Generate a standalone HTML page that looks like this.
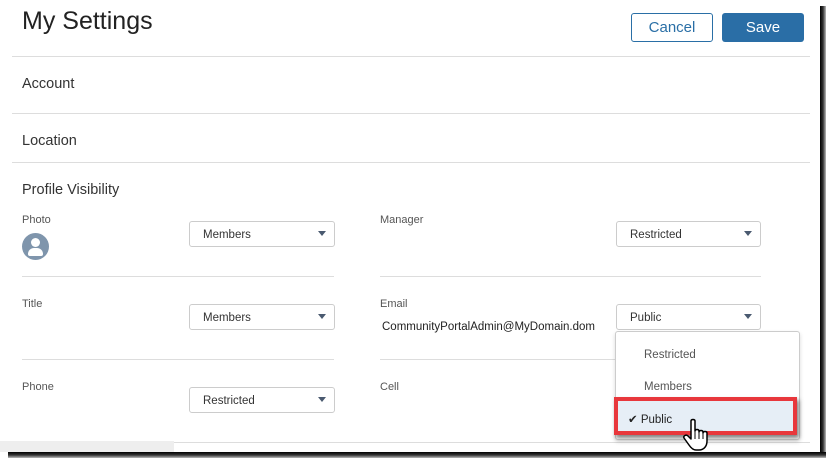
<!DOCTYPE html><html><head><style>
body{margin:0;width:830px;height:463px;background:#fff;position:relative;overflow:hidden;font-family:"Liberation Sans",sans-serif;color:#333}
.a{position:absolute}
.line{position:absolute;height:1px;background:#ddd}
.sel{position:absolute;width:146px;height:26px;border:1px solid #ccc;border-radius:3px;font-size:11.5px;line-height:26px;padding-left:13px;box-sizing:border-box;color:#333;background:#fff}
.sel:after{content:"";position:absolute;right:8px;top:9px;border:4px solid transparent;border-top:5px solid #4a5a70}
.lab{position:absolute;font-size:11px;color:#555}
.h{position:absolute;left:22px;font-size:14.5px;color:#333}
</style></head><body>
<div class="a" style="left:22px;top:7px;font-size:25px;color:#222">My Settings</div>
<div class="a" style="left:631px;top:13px;width:82px;height:29px;border:1px solid #2a6fa6;border-radius:3px;box-sizing:border-box;text-align:center;line-height:27px;font-size:15px;color:#2a6fa6">Cancel</div>
<div class="a" style="left:722px;top:13px;width:82px;height:29px;background:#2a6ea6;border-radius:3px;text-align:center;line-height:29px;font-size:15px;color:#fff">Save</div>
<div class="line" style="left:12px;top:56px;width:798px"></div>
<div class="h" style="top:76px">Account</div>
<div class="line" style="left:12px;top:113px;width:798px"></div>
<div class="h" style="top:133px">Location</div>
<div class="line" style="left:12px;top:162px;width:798px"></div>
<div class="h" style="top:182px">Profile Visibility</div>

<div class="lab" style="left:22px;top:214px">Photo</div>
<div class="a" style="left:22px;top:233px;width:27px;height:27px;border-radius:50%;background:#7f95ac;overflow:hidden">
<div class="a" style="left:9px;top:5px;width:9px;height:9px;border-radius:50%;background:#fff"></div>
<div class="a" style="left:6px;top:15px;width:15px;height:8px;border-radius:6px 6px 2px 2px;background:#fff"></div></div>
<div class="sel" style="left:189px;top:221px">Members</div>
<div class="line" style="left:22px;top:276px;width:312px"></div>
<div class="lab" style="left:22px;top:298px">Title</div>
<div class="sel" style="left:189px;top:304px">Members</div>
<div class="line" style="left:22px;top:359px;width:312px"></div>
<div class="lab" style="left:22px;top:381px">Phone</div>
<div class="sel" style="left:189px;top:387px">Restricted</div>
<div class="line" style="left:0;top:442px;width:810px"></div>
<div class="a" style="left:0;top:441px;width:174px;height:11px;background:#eee"></div>

<div class="lab" style="left:380px;top:214px">Manager</div>
<div class="sel" style="left:616px;top:221px;width:145px">Restricted</div>
<div class="line" style="left:380px;top:276px;width:381px"></div>
<div class="lab" style="left:380px;top:298px">Email</div>
<div class="a" style="left:382px;top:321px;font-size:11.5px;color:#222">CommunityPortalAdmin@MyDomain.dom</div>
<div class="sel" style="left:616px;top:304px;width:145px">Public</div>
<div class="line" style="left:380px;top:359px;width:235px"></div>
<div class="lab" style="left:380px;top:381px">Cell</div>

<div class="a" style="left:615px;top:331px;width:185px;height:109px;border:1px solid #ccc;border-radius:3px;box-sizing:border-box;background:#fff;box-shadow:0 2px 4px rgba(0,0,0,.15)"></div>
<div class="a" style="left:644px;top:349px;font-size:11.5px;color:#555">Restricted</div>
<div class="a" style="left:644px;top:381px;font-size:11.5px;color:#555">Members</div>
<div class="a" style="left:614px;top:397px;width:183px;height:38px;border:4px solid #e8373c;box-sizing:border-box;background:#e6eef6;box-shadow:2px 3px 4px rgba(0,0,0,.5)"></div>
<div class="a" style="left:628px;top:412px;font-size:11.5px;color:#222">✔ Public</div>
<svg class="a" style="left:682px;top:418px" width="28" height="34" viewBox="0 0 28 34">
<path d="M9 3c0-2 4-2 4 0v10c0-2 4-2 4 0v1c0-2 4-2 4 0v1c0-2 4-2 4 0v8c0 5-3 9-8 9h-3c-3 0-5-2-7-5l-5-7c-1-2 2-4 4-2l3 3V3z" fill="#fff" stroke="#000" stroke-width="1.5" stroke-linejoin="round"/>
<path d="M13 13v8M17 14v7M21 15v6" stroke="#000" stroke-width="1"/></svg>

<div class="a" style="left:820px;top:6px;width:6px;height:452px;background:linear-gradient(to right,#000,#333 50%,#bbb)"></div>
<div class="a" style="left:8px;top:452px;width:818px;height:6px;background:linear-gradient(to bottom,#000,#333 50%,#bbb)"></div>
</body></html>
